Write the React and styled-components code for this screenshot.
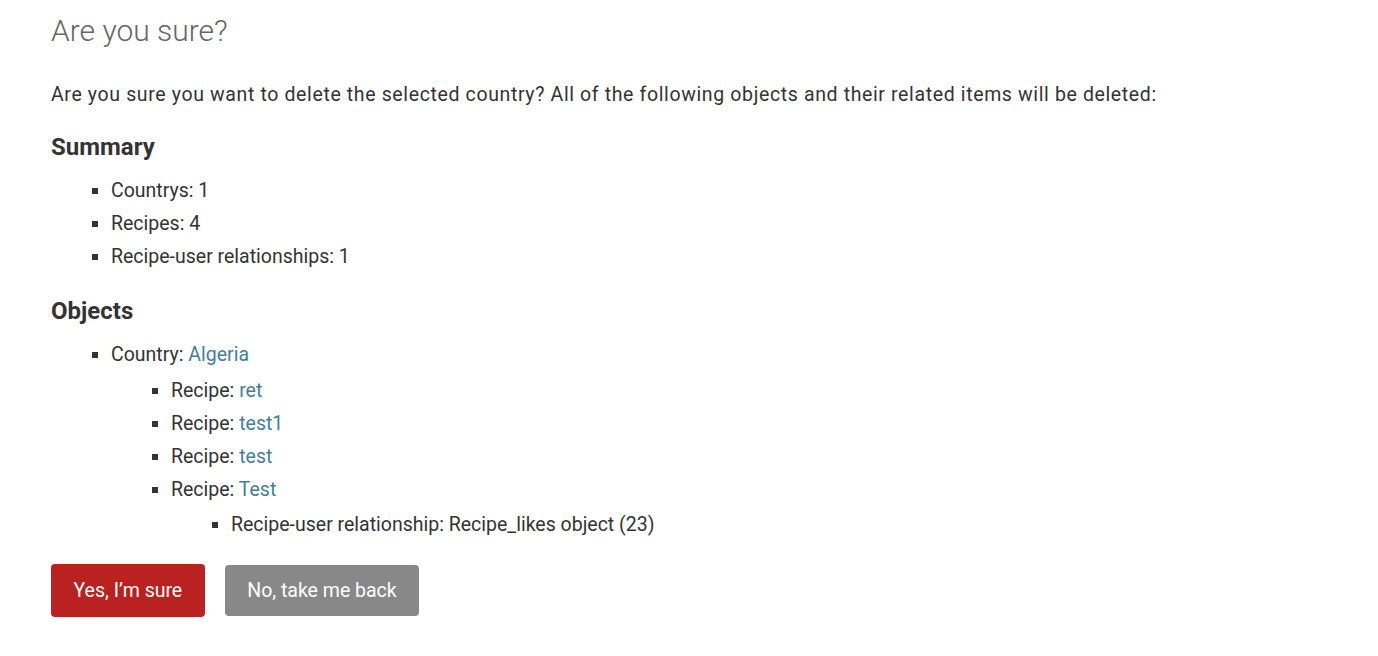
import React from 'react'
import styled, { createGlobalStyle } from 'styled-components'

const GlobalStyle = createGlobalStyle`
    html, body {
        margin: 0;
        padding: 0;
        background: #fff;
    }
    body {
        font-family: Roboto, "Liberation Sans", sans-serif;
        color: #333;
    }
`

const App = () => {
    return (
        <>
            <GlobalStyle />
            <Container>
                <Title>Are you sure?</Title>
                <Intro>
                    Are you sure you want to delete the selected country? All of the following objects and their related items will be deleted:
                </Intro>
                <Heading>Summary</Heading>
                <List>
                    <Item>Countrys: 1</Item>
                    <Item>Recipes: 4</Item>
                    <Item>Recipe-user relationships: 1</Item>
                </List>
                <Heading>Objects</Heading>
                <List>
                    <Item>
                        Country: <Link href="#">Algeria</Link>
                        <List nested>
                            <Item>Recipe: <Link href="#">ret</Link></Item>
                            <Item>Recipe: <Link href="#">test1</Link></Item>
                            <Item>Recipe: <Link href="#">test</Link></Item>
                            <Item>
                                Recipe: <Link href="#">Test</Link>
                                <List nested>
                                    <Item>Recipe-user relationship: Recipe_likes object (23)</Item>
                                </List>
                            </Item>
                        </List>
                    </Item>
                </List>
                <Actions>
                    <Button>Yes, I’m sure</Button>
                    <Button cancel>No, take me back</Button>
                </Actions>
            </Container>
        </>
    )
}

export default App

const Container = styled.div`
    padding: 12px 51px 0;
`
const Title = styled.h1`
    margin: 0;
    font-size: 30px;
    font-weight: 300;
    color: #666;
    line-height: 38px;
`
const Intro = styled.p`
    margin: 32px 0 0;
    font-size: 19.5px;
    letter-spacing: 0.63px;
    line-height: 26px;
`
const Heading = styled.h2`
    margin: 25px 0 0;
    font-size: 24px;
    font-weight: 700;
    line-height: 28px;
    color: #333;
`
const List = styled.ul`
    margin: ${p => (p.nested ? '3.5px 0 0' : '13px 0 -1px')};
    padding-left: 60px;
`
const Item = styled.li`
    list-style-type: square;
    font-size: 19.5px;
    line-height: 31px;
    padding: 1px 0;
`
const Link = styled.a`
    color: #447e9b;
    text-decoration: none;
`
const Actions = styled.div`
    display: flex;
    align-items: center;
    gap: 20px;
    margin-top: 22px;
`
const Button = styled.button`
    font-family: Roboto, "Liberation Sans", sans-serif;
    font-size: 19.5px;
    color: #fff;
    border: none;
    border-radius: 4px;
    background: ${p => (p.cancel ? '#888' : '#ba2121')};
    height: ${p => (p.cancel ? '51px' : '53px')};
    padding: 0 22.5px;
    cursor: pointer;
`
